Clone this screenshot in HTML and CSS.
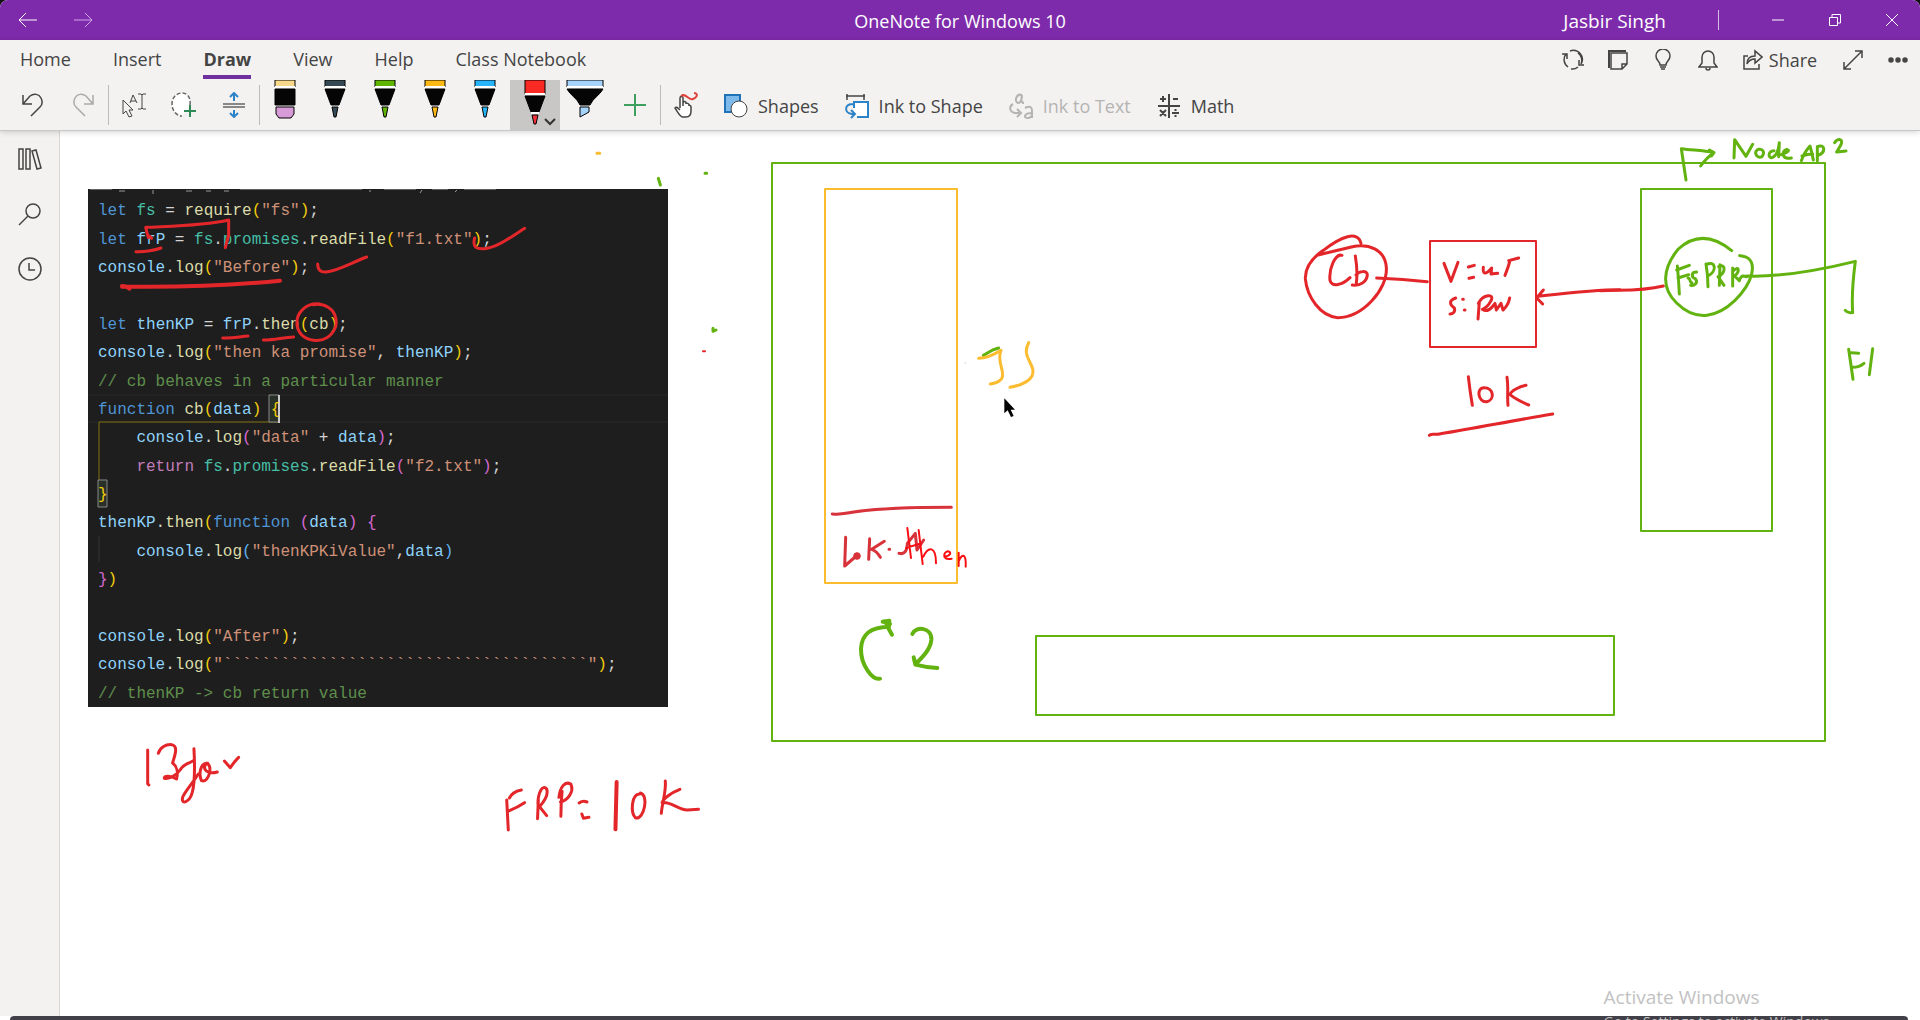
FILE: index.html
```html
<!DOCTYPE html>
<html lang="en">
<head>
<meta charset="utf-8">
<title>OneNote for Windows 10</title>
<link rel="stylesheet" href="styles.css">
</head>
<body>
<header class="titlebar">
  <div class="history">
    <button class="title-btn" aria-label="Back"><svg width="20" height="16" viewBox="0 0 20 16"><path d="M19 8H1M8 1L1 8l7 7"/></svg></button>
    <button class="title-btn faded" aria-label="Forward"><svg width="20" height="16" viewBox="0 0 20 16"><path d="M1 8h18M12 1l7 7-7 7"/></svg></button>
  </div>
  <h1 class="app-name">OneNote for Windows 10</h1>
  <div class="window-tools">
    <span class="user">Jasbir Singh</span>
    <span class="title-rule"></span>
    <button class="window-btn" aria-label="Minimize"><svg width="14" height="14" viewBox="0 0 14 14"><path d="M1 7h12"/></svg></button>
    <button class="window-btn" aria-label="Restore"><svg width="14" height="14" viewBox="0 0 14 14"><path d="M1.500 4.500h8v8h-8zM4 4V1.500h8.500v8.500H10"/></svg></button>
    <button class="window-btn" aria-label="Close"><svg width="14" height="14" viewBox="0 0 14 14"><path d="M1 1l12 12M13 1L1 13"/></svg></button>
  </div>
</header>

<div class="ribbon">
  <div class="tab-row">
    <nav class="tabs">
      <button class="tab">Home</button>
      <button class="tab">Insert</button>
      <button class="tab active">Draw</button>
      <button class="tab">View</button>
      <button class="tab">Help</button>
      <button class="tab">Class Notebook</button>
    </nav>
    <div class="actions">
      <button class="action" aria-label="Sync"><svg width="24" height="22" viewBox="0 0 24 22"><path d="M7 18A9 9 0 0 1 5 5M1 5h5v5M9 2a9 9 0 0 1 11 13M17 4a9 9 0 0 1 3 11M23 16h-5v-5M10 20a9 9 0 0 0 7-2"/></svg></button>
      <button class="action" aria-label="Feed"><svg width="22" height="22" viewBox="0 0 22 22"><path d="M2 19V2h17" stroke-width="2"/><path d="M4 4h16v11l-5 5H4zM15 20v-5h5"/></svg></button>
      <button class="action" aria-label="Tips"><svg width="20" height="22" viewBox="0 0 20 22"><path d="M7 16c0-4-4-4-4-9a7 7 0 0 1 14 0c0 5-4 5-4 9zM7 18h6M8 20h4"/></svg></button>
      <button class="action" aria-label="Notifications"><svg width="20" height="22" viewBox="0 0 20 22"><path d="M1 18h18l-3-4V8a6 6 0 0 0-12 0v6zM8 19a2 2 0 0 0 4 0"/></svg></button>
      <button class="action share"><svg width="20" height="22" viewBox="0 0 20 22"><path d="M5 7H1v13h15v-5M4 15c0-6 3-8 8-8V2l7 6-7 6v-4c-4 0-6 1-8 5z"/></svg>Share</button>
      <button class="action" aria-label="Full screen"><svg width="20" height="20" viewBox="0 0 20 20"><path d="M1 19L19 1M12 1h7v7M1 12v7h7"/></svg></button>
      <button class="action" aria-label="More"><svg class="solid" width="20" height="6" viewBox="0 0 20 6"><circle cx="3" cy="3" r="2"/><circle cx="10" cy="3" r="2"/><circle cx="17" cy="3" r="2"/></svg></button>
    </div>
  </div>

  <div class="toolbar">
    <button class="tool" aria-label="Undo"><svg width="22" height="24" viewBox="0 0 22 24"><path d="M1 2v9h9M1 11L8 3c4-3 9-2 11 2 2 4 1 7-1 9l-9 9" stroke-width="1.500"/></svg></button>
    <button class="tool faded-tool" aria-label="Redo"><svg width="22" height="24" viewBox="0 0 22 24"><path d="M21 2v9h-9M21 11l-7-8C10 0 5 1 3 5c-2 4-1 7 1 9l9 9" stroke-width="1.500"/></svg></button>
    <span class="rule"></span>
    <button class="tool" aria-label="Select objects or type text"><svg width="24" height="26" viewBox="0 0 24 26"><path d="M1 8v14l3-3 3 6 3-1-3-6h4z"/><path d="M8 11l3-8 4 8M9 9h5M16 2h3l1 1 1-1h3M20 3v13M16 17h3l1-1 1 1h3"/></svg></button>
    <button class="tool" aria-label="Lasso select"><svg width="26" height="26" viewBox="0 0 26 26"><path d="M19 13c1-8-3-12-8-12S1 5 1 12s5 12 10 12" fill="#fff" stroke="#666" stroke-width="1.500" stroke-dasharray="4 2"/><path d="M19 13v12M13 19h12" stroke="#2e8b57" stroke-width="2"/></svg></button>
    <button class="tool" aria-label="Insert space"><svg width="24" height="26" viewBox="0 0 24 26"><path d="M1 12h22M1 15h22" stroke="#666" stroke-width="1.500"/><path d="M12 9V2M8 5l4-4 4 4M12 18v7M8 21l4 4 4-4" stroke="#2d83c7" stroke-width="2"/></svg></button>
    <span class="rule"></span>
    <button class="tool pen" aria-label="Eraser"><svg width="24" height="50" viewBox="0 0 24 50"><path d="M2 0h20v7H2z" fill="#f8d98c"/><path d="M2 7h20" class="gap"/><path d="M2 9h20v16H2z" class="ink"/><path d="M3 27h18v7l-3 4H6l-3-4z" fill="#d79cd8"/></svg></button>
    <button class="tool pen" aria-label="Slate pen"><svg width="24" height="50" viewBox="0 0 24 50"><path d="M2 0h20v7H2z" fill="#354a55"/><path d="M2 7h20M8 26h8" class="gap"/><path d="M2 9h20l-6 16H8z" class="ink"/><path d="M9 27h6l-2 10h-2z" fill="#354a55"/></svg></button>
    <button class="tool pen" aria-label="Green pen"><svg width="24" height="50" viewBox="0 0 24 50"><path d="M2 0h20v7H2z" fill="#5fb404"/><path d="M2 7h20M8 26h8" class="gap"/><path d="M2 9h20l-6 16H8z" class="ink"/><path d="M9 27h6l-2 10h-2z" fill="#5fb404"/></svg></button>
    <button class="tool pen" aria-label="Yellow pen"><svg width="24" height="50" viewBox="0 0 24 50"><path d="M2 0h20v7H2z" fill="#fdb913"/><path d="M2 7h20M8 26h8" class="gap"/><path d="M2 9h20l-6 16H8z" class="ink"/><path d="M9 27h6l-2 10h-2z" fill="#fdb913"/></svg></button>
    <button class="tool pen" aria-label="Blue pen"><svg width="24" height="50" viewBox="0 0 24 50"><path d="M2 0h20v7H2z" fill="#28b4fa"/><path d="M2 7h20M8 26h8" class="gap"/><path d="M2 9h20l-6 16H8z" class="ink"/><path d="M9 27h6l-2 10h-2z" fill="#28b4fa"/></svg></button>
    <button class="tool pen selected" aria-label="Red pen"><svg width="50" height="50" viewBox="0 0 50 50"><path d="M15 0h20v14H15z" fill="#f92a23"/><path d="M15 14h20" class="gap"/><path d="M15 16h20l-6 16h-8z" class="ink"/><path d="M21 33h8" class="gap"/><path d="M22 35h6l-2 9h-2z" fill="#f0323c"/><path d="M35 39l5 5 5-5" stroke="#333" stroke-width="2"/></svg></button>
    <button class="tool pen" aria-label="Highlighter"><svg width="38" height="50" viewBox="0 0 38 50"><path d="M1 0h36v7H1z" fill="#a6d3fb"/><path d="M1 7h36" class="gap"/><path d="M1 9h36c-3 6-10 9-13 16H14C11 18 4 15 1 9z" class="ink"/><path d="M14 27h9v5l-9 5z" fill="#a6d3fb"/></svg></button>
    <button class="tool" aria-label="Add pen"><svg width="24" height="24" viewBox="0 0 24 24"><path d="M12 1v22M1 12h22" stroke="#3f9f5f" stroke-width="2"/></svg></button>
    <span class="rule"></span>
    <button class="tool" aria-label="Draw with touch"><svg width="26" height="28" viewBox="0 0 26 28"><path d="M7 17V7c0-2 3-2 3 0v8-3c0-2 3-2 3 0v1c0-1 3-1 3 1v1c0-1 2-1 2 1v4c0 4-2 6-5 6h-3c-3 0-4-3-8-9 1-2 3 0 5 2" fill="#fff" stroke-width="1.500"/><path d="M8 5c5-4 7 5 12 3s5-6 1-6" stroke="#e0433b" stroke-width="2"/></svg></button>
    <button class="tool wide"><svg width="24" height="26" viewBox="0 0 24 26"><path d="M1 2h15v17H1z" fill="#7db9ea" stroke="#2072b8" stroke-width="2"/><circle cx="15" cy="16" r="8" fill="#fff"/></svg>Shapes</button>
    <button class="tool wide"><svg width="24" height="26" viewBox="0 0 24 26"><path d="M2 1v6M19 1v6M1 3h19" stroke-width="1.500"/><path d="M9 9h14v15H9" fill="#fff" stroke="none"/><path d="M9 15V9h14v15H12M8 11c-9 0-9 9-1 10h3M6 17l4 4-4 4" stroke="#2d83c7" stroke-width="2"/></svg>Ink to Shape</button>
    <button class="tool wide" disabled><svg width="24" height="26" viewBox="0 0 24 26"><path d="M13 2c-6-2-8 7-4 8 3 0 4-5 4-8-1 4-1 8 2 8M16 15c6-3 7 0 7 3v7m0-5c-8 0-9 5-4 5 2 0 4-2 4-3M4 11c-4 2-4 8 2 9h5M8 16l4 4-4 4" stroke-width="2"/></svg>Ink to Text</button>
    <button class="tool wide"><svg width="24" height="26" viewBox="0 0 24 26"><path d="M12 1v24M1 13h22M3 6h6M6 3v6M16 6h5M3 17l6 6M9 17l-6 6M15 20h7M18.500 16v2M18.500 22v2" stroke-width="2"/></svg>Math</button>
  </div>
</div>

<main class="workspace">
  <nav class="sidebar">
    <button class="side-btn" aria-label="Navigation"><svg width="24" height="22" viewBox="0 0 24 22"><path d="M1 1h4v20H1zM8 1h4v20H8zM14 3l4-1 5 18-4 1z"/></svg></button>
    <button class="side-btn" aria-label="Search"><svg width="24" height="24" viewBox="0 0 24 24"><circle cx="15" cy="9" r="7"/><path d="M10 14l-9 9"/></svg></button>
    <button class="side-btn" aria-label="Recent notes"><svg width="24" height="24" viewBox="0 0 24 24"><circle cx="12" cy="12" r="11"/><path d="M11 6v7h6"/></svg></button>
  </nav>
  <section class="canvas" aria-label="Note page">
    <div class="snippet">
      <svg class="guides" width="580" height="518" viewBox="88 189 580 518" aria-hidden="true">
        <path d="M119 191h6M153 190v4M186 191h6M206 191h5M224 191h5M370 190v2M420 193l2-3M455 192l2-2" stroke="#999"/>
        <path d="M90 189h22M240 189h122M384 189h32M432 189h16M464 189h32" stroke="#aaa"/>
        <path d="M88 395h580M88 422h580" stroke="#292929"/>
        <path d="M99 536v26" stroke="#333"/>
        <path d="M279 422H99v58" stroke="#80700f"/>
        <path d="M269 395h10v27h-10zM98 480h9v27h-9z" stroke="#888" fill="#283028"/>
        <path d="M279 395v28" stroke="#ccc" stroke-width="2"/>
      </svg>
<div class="code"><div><i class="k">let</i> <i class="t">fs</i> = <i class="f">require</i><i class="b">(</i><i class="s">"fs"</i><i class="b">)</i>;</div><div><i class="k">let</i> <i class="v">frP</i> = <i class="t">fs</i>.<i class="t">promises</i>.<i class="f">readFile</i><i class="b">(</i><i class="s">"f1.txt"</i><i class="b">)</i>;</div><div><i class="v">console</i>.<i class="f">log</i><i class="b">(</i><i class="s">"Before"</i><i class="b">)</i>;</div><div></div><div><i class="k">let</i> <i class="v">thenKP</i> = <i class="v">frP</i>.<i class="f">then</i><i class="b">(</i><i class="f">cb</i><i class="b">)</i>;</div><div><i class="v">console</i>.<i class="f">log</i><i class="b">(</i><i class="s">"then ka promise"</i>, <i class="v">thenKP</i><i class="b">)</i>;</div><div><i class="c">// cb behaves in a particular manner</i></div><div><i class="k">function</i> <i class="f">cb</i><i class="b">(</i><i class="v">data</i><i class="b">)</i> <i class="b">{</i></div><div>    <i class="v">console</i>.<i class="f">log</i><i class="p">(</i><i class="s">"data"</i> + <i class="v">data</i><i class="p">)</i>;</div><div>    <i class="r">return</i> <i class="t">fs</i>.<i class="t">promises</i>.<i class="f">readFile</i><i class="p">(</i><i class="s">"f2.txt"</i><i class="p">)</i>;</div><div><i class="b">}</i></div><div><i class="v">thenKP</i>.<i class="f">then</i><i class="b">(</i><i class="k">function</i> <i class="p">(</i><i class="v">data</i><i class="p">)</i> <i class="p">{</i></div><div>    <i class="v">console</i>.<i class="f">log</i><i class="q">(</i><i class="s">"thenKPKiValue"</i>,<i class="v">data</i><i class="q">)</i></div><div><i class="p">}</i><i class="b">)</i></div><div></div><div><i class="v">console</i>.<i class="f">log</i><i class="b">(</i><i class="s">"After"</i><i class="b">)</i>;</div><div><i class="v">console</i>.<i class="f">log</i><i class="b">(</i><i class="s">"``````````````````````````````````````"</i><i class="b">)</i>;</div><div><i class="c">// thenKP -&gt; cb return value</i></div></div>
    </div>

    <svg class="strokes" width="1860" height="885" viewBox="60 131 1860 885" aria-hidden="true">
      <!-- diagram boxes -->
      <g class="green box">
        <path d="M772 163h1053v578H772zM1641 189h131v342h-131zM1036 636h578v79h-578z"/>
      </g>
      <path class="yellow box" d="M825 189h132v394H825z"/>
      <path class="red box" d="M1430 241h106v106h-106z"/>

      <!-- marks over the code -->
      <svg x="0" y="130" width="380" height="300" viewBox="0 0 1140 900">
        <g class="red">
          <path d="M445 323l-8-31c80-4 170-4 249-22v45l-10 38M455 325q-5-8-12-8M408 365q40 1 75-11" />
          <path d="M366 468q15 0 22 8M366 470c150 2 320-2 474-18" stroke-width="4"/>
          <path d="M953 402q0 26 25 24c35-3 80-30 122-45"/>
          <path d="M668 624c30 2 50-4 76-6M790 630c30 1 60-8 91-9"/>
          <path d="M960 522c-40-5-73 25-69 63 5 35 35 48 65 46 35-4 57-35 52-63-5-32-35-50-68-44"/>
        </g>
      </svg>
      <svg x="370" y="130" width="380" height="300" viewBox="0 0 1140 900">
        <path class="red" d="M314 324c-8 30 8 34 30 32 40-5 80-36 120-61" stroke-width="4"/>
        <path class="yellow" d="M681 70h8" stroke-width="4"/>
        <path class="green" d="M1005 130h5M865 145l6 20M1029 595v9l9-4" stroke-width="4"/>
        <path class="red faint" d="M999 664h6"/>
      </svg>

      <!-- notes under the code -->
      <svg x="120" y="720" width="620" height="130" viewBox="0 0 1568 390" preserveAspectRatio="none">
        <g class="red">
          <path d="M70 90v101l3 4M97 100c4-18 20-28 34-26 17 5 8 30 2 55 12 10 14 30 10 48-14-10-32-12-31-2 15 5 34-15 40-25 10-20 20-18 32-27"/>
          <path d="M187 86c2 45 4 95-4 130-6 30-28 40-25 18 3-15 20-35 40-72"/>
          <path d="M222 130c-18-2-24 30-16 52 20 8 30-50 12-52-12 20 5 34 28 26M264 123l15 20q10-18 21-31"/>
          <path d="M978 240l4 90M985 234c5-14 14-20 30-24M985 272q20-10 38-24M1058 240l-2 56M1057 252c0-35 12-60 22-45 6 20-8 40-18 53l18 27"/>
          <path d="M1118 214q-3 40-3 75M1110 232c3-30 15-50 30-40 10 25-10 50-26 54M1161 249q10-8 20-3M1168 282l4 13 14-3"/>
          <path d="M1256 186l-3 142" stroke-width="4"/>
          <path d="M1314 222c-20 0-24 55-10 72 22 5 34-70 12-75M1379 183c3 30-8 65-10 97M1416 208c-22 10-42 28-45 40 20-6 40 22 64 22l28-2"/>
        </g>
      </svg>

      <!-- call stack and event loop -->
      <svg x="760" y="300" width="340" height="420" viewBox="0 0 1020 1260">
        <path class="green" d="M670 166l28-16 18-6"/>
        <g class="yellow" stroke-width="4">
          <path d="M656 175c25 0 45-10 67-24-15 35 15 65 2 85q-10 13-34 16M806 128c-25 45 25 65 10 100-10 20-35 28-66 34"/>
        </g>
        <path class="crimson" d="M217 642c60 6 20-20 357-20" stroke-width="4"/>
        <g class="crimson">
          <path d="M257 712l-3 86 35-30" /><circle cx="291" cy="768" r="10"/>
          <path d="M329 716l-3 62M373 724l-38 24q15 5 26 24M387 748h2M417 760q24 6 25-30l24-30 5 50 20-30"/>
        </g>
        <g class="bright">
          <path d="M442 684l11 90M438 744l44-14M476 690l12 102M490 770c14-30 38-35 38 20M553 770c18-2 24-14 10-16-16 4-14 28 12 22M596 758v40M597 782c10-24 22-20 20 18"/>
        </g>
        <g class="green heavy">
          <path d="M360 1136c-22 5-58-40-57-90 2-45 30-65 84-66M368 965l20-3-2 24 10 18M372 964q10 12 18 8"/>
          <path d="M457 1002c10-25 60-20 57 18-3 28-25 50-47 72l-6-20 5 22q30 8 66 10"/>
        </g>
        <path d="M733 295v45l10-9 10 20 8-3-9-19h13z" fill="#000"/>
        <circle cx="616" cy="189" r="2" fill="#ccc"/>
      </svg>

      <!-- callback and promise value -->
      <svg x="1280" y="220" width="340" height="240" viewBox="0 0 1020 720">
        <g class="red">
          <path d="M243 70c-10-40-60-20-113 21-30 20-55 50-54 85 5 55 45 113 97 117 75 0 150-85 146-150-3-55-55-75-105-62l-100 24"/>
          <path d="M186 106c-20-6-40 40-36 75 6 22 38 14 60-8M226 108c5 30 6 60 3 80M228 165c10-12 34-15 34 0-2 20-20 33-45 30"/>
          <path d="M290 174q80 3 152 11"/>
          <path d="M492 130l21 54 21-57M565 141l18-5M567 175l14-3M610 142c-2 20 5 25 25 2l-2 18 20-2M690 122q-5 20-15 44M686 122l30-8"/>
          <path d="M527 234c-22 8-18 20-4 30 4 12-5 18-13 18M548 238h2M553 270h2M598 245q-2 30-4 52M595 250c15-28 50-30 38-8q-10 20-26 26 15 10 30-8l8-10 4 20 14-20 6 20q16-14 20-36"/>
          <path d="M1020 209c-80 0-160 10-248 20M790 210l-20 24 18 18"/>
          <path d="M565 470q5 45 12 86M612 503c-24 0-18 45 8 42 25-5 22-42-8-42M681 472c5 30 0 55 3 84M738 496c-20 4-45 16-48 28 15 12 35 22 56 31"/>
          <path d="M448 646c5-8 20 0 30-4 120-20 220-40 340-60"/>
        </g>
      </svg>

      <!-- Node API side -->
      <svg x="1600" y="130" width="320" height="270" viewBox="0 0 960 810">
        <path class="red" d="M0 482c70-3 120 3 190-14"/>
        <g class="green">
          <path d="M258 150l-14-94c35 5 65 4 98 12q-20 12-40 40M328 60l14 8-8 10"/>
          <path d="M402 84l2-55 34 50 20-36M478 58c-20 2-10 30 8 22 10-14 2-24-10-22M522 62c-20 0-18 26-4 20 14-6 18-26 20-44l-2 42M544 74c14-6 30-12 16-16-16 4-16 32 14 26M604 92q8-24 26-44 6 20 10 42M606 78q16-6 32-6M652 92V50c22-10 28 16 2 26M704 38c10-14 28-12 18 8l-12 20 28-3"/>
          <path d="M395 362c-55-45-110-50-160-5-50 60-50 120-5 162 60 60 125 40 175-8 60-60 60-110 40-126-10-8-22-6-26-8"/>
          <path d="M232 408q4 40 6 84M230 420l38-14M234 444l32-10M264 444c8 0 4 14 12 14M290 426c-18 0-16 16-4 20 10 14-4 22-14 20M318 402q6 34 6 68M318 404c30-15 34 20 6 34M360 404l-2 62M356 410c24-12 20 24-2 30l18 26M398 414v54M398 424c20-20 22 0 6 14l14 14q4-14 12-14l10 2"/>
          <path d="M440 438c110 4 220-18 326-44-6 45-12 95-8 154M736 541q8 10 22 6"/>
          <path d="M746 658l13 90M754 668l22 2M758 712q20 0 34-12M818 656l-10 78"/>
        </g>
      </svg>
    </svg>
  </section>
</main>
<footer class="edge"></footer>
<aside class="watermark">
  <p class="watermark-title">Activate Windows</p>
  <p class="watermark-text">Go to Settings to activate Windows.</p>
</aside>
</body>
</html>
```
FILE: styles.css
```css
* { box-sizing: border-box; }

html { background: #111; }

body {
  position: relative;
  margin: 0;
  height: 100vh;
  display: flex;
  flex-direction: column;
  overflow: hidden;
  border-radius: 8px 8px 0 0;
  background: #fff;
  color: #444;
  font-family: "Open Sans", "Noto Sans", sans-serif;
  font-size: 18px;
  line-height: 24px;
}

button {
  border: 0;
  padding: 0;
  background: none;
  color: inherit;
  font: inherit;
  display: flex;
  align-items: center;
  justify-content: center;
}

svg { fill: none; stroke: currentColor; flex: none; }
svg svg { overflow: visible; }

/* title bar */
.titlebar {
  height: 40px;
  flex: none;
  display: grid;
  grid-template-columns: 1fr auto 1fr;
  align-items: center;
  background: #7e2bab;
  color: #fff;
}
.history { display: flex; }
.title-btn { width: 55px; height: 40px; }
.faded { color: #d3a6ea; }
.app-name { margin: 0; padding-top: 2px; font-size: 18px; font-weight: 400; }
.window-tools { display: flex; align-items: center; justify-content: flex-end; }
.user { padding-top: 2px; font-size: 19px; }
.title-rule { width: 1px; height: 20px; margin: 0 30px 0 52px; background: #d9bfe6; }
.window-btn { width: 57px; height: 40px; }

/* ribbon */
.ribbon {
  position: relative;
  z-index: 1;
  flex: none;
  background: #f3f2f1;
  border-bottom: 1px solid #c8c8c8;
  box-shadow: 0 1px 6px #0000002e;
}
.tab-row { height: 40px; display: flex; justify-content: space-between; }
.tabs { display: flex; gap: 42px; padding-left: 20px; }
.tab { height: 39px; border-bottom: 4px solid transparent; padding-top: 3px; }
.tab.active { border-color: #7030a0; font-weight: 700; }
.actions { display: flex; }
.action { width: 45px; height: 40px; }
.action svg { stroke-width: 1.5; }
.action.share { width: 100px; gap: 6px; }
.action .solid { fill: currentColor; }

.toolbar { height: 50px; display: flex; align-items: center; padding-left: 8px; }
.rule { width: 1px; height: 40px; background: #bdbcbb; }
.tool { width: 50px; height: 50px; }
.tool.wide { width: auto; gap: 10px; padding: 2px 13px 0; }
.tool:disabled { color: #b5b4b3; }
.faded-tool { color: #aaa; }
.pen svg { stroke: #000; }
.pen .ink { fill: #050505; }
.pen .gap { stroke: #fff; stroke-width: 2; }
.pen.selected { background: #c8c7c6; }

/* page area */
.workspace { flex: 1; min-height: 0; display: flex; }
.sidebar { width: 60px; background: #f3f2f1; border-right: 1px solid #d9d6d6; }
.side-btn { width: 59px; height: 55px; }
.side-btn svg { stroke-width: 1.5; }
.canvas { position: relative; flex: 1; overflow: hidden; background: #fff; }

.snippet {
  position: absolute;
  left: 28px;
  top: 58px;
  width: 580px;
  height: 518px;
  padding: 8px 10px 0;
  background: #1e1e1e;
}
.guides { position: absolute; left: 0; top: 0; }
.code {
  position: relative;
  height: 511px;
  display: grid;
  grid-auto-rows: 1fr;
  align-items: center;
  color: #d4d4d4;
  font-family: "Liberation Mono", monospace;
  font-size: 16px;
  line-height: 28px;
  white-space: pre;
}
.code i { font-style: normal; }
.k { color: #4f94d4; }
.t { color: #45bfa6; }
.v { color: #8fd3fb; }
.f { color: #dcdcaa; }
.s { color: #ce9178; }
.c { color: #5f8f4c; }
.r { color: #c07cba; }
.b { color: #f2cc0c; }
.p { color: #d468cf; }
.q { color: #5fb0f0; }

/* handwriting */
.strokes { position: absolute; left: 0; top: 0; stroke: none; }
.strokes path { vector-effect: non-scaling-stroke; stroke-linecap: round; stroke-linejoin: round; }
.strokes svg { stroke: none; }
.red { stroke: #e3262a; stroke-width: 3; }
.crimson { stroke: #d8323a; stroke-width: 3; }
.crimson circle { fill: #d8323a; }
.bright { stroke: #fb0d12; stroke-width: 2; }
.green { stroke: #62b310; stroke-width: 3; }
.yellow { stroke: #fbbc30; stroke-width: 3; }
.heavy { stroke-width: 4; }
.faint { stroke-width: 2; }
.box { stroke-width: 2; }

/* system notice over the lower corner of the page */
.watermark { position: absolute; right: 87px; bottom: -14px; color: #c2c2c2; }
.watermark p { margin: 0; white-space: nowrap; }
.watermark-title { font-size: 19px; line-height: 26px; }
.watermark-text { font-size: 14px; line-height: 24px; }

.edge { height: 4px; flex: none; margin: 0 12px 0 10px; background: #413f47; border-radius: 4px 4px 0 0; }
```
